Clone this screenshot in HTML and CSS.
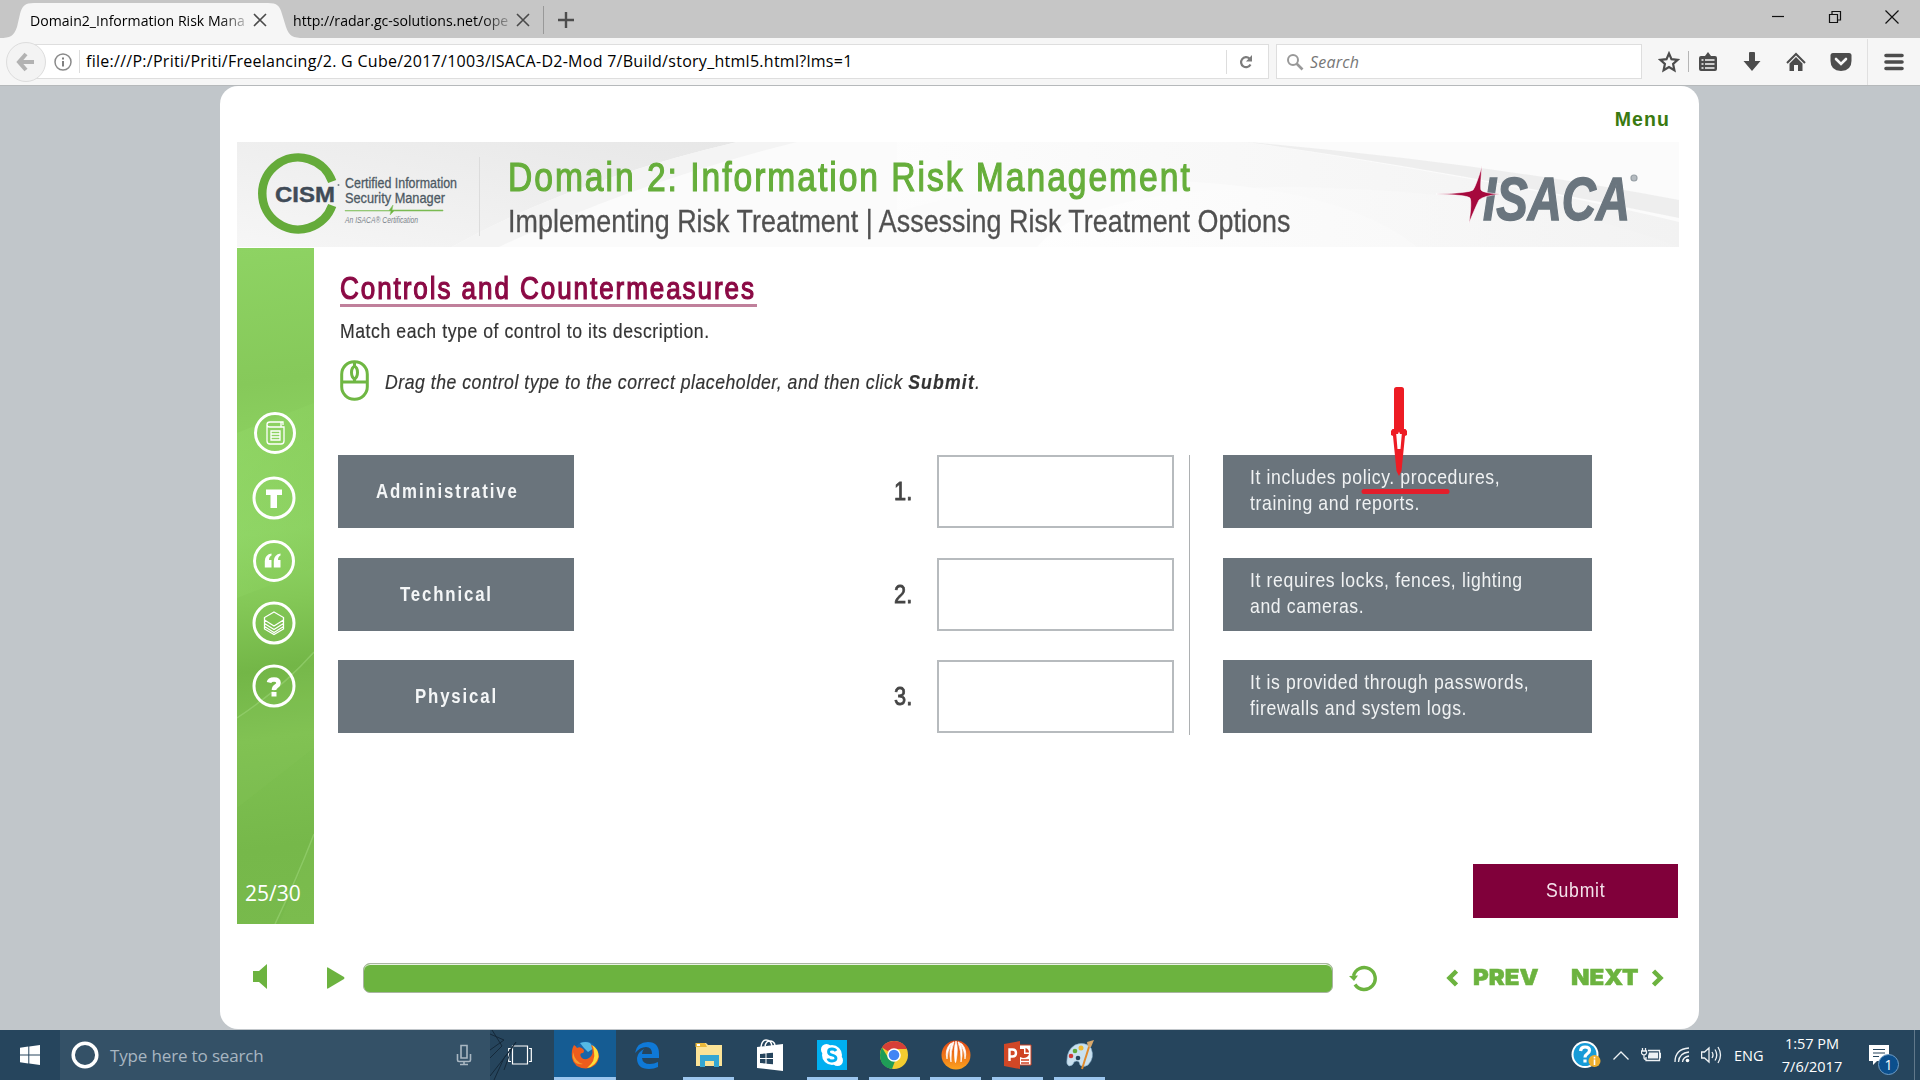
FILE: index.html
```html
<!DOCTYPE html>
<html lang="en">
<head>
<meta charset="utf-8">
<title>Domain2_Information Risk Management</title>
<link rel="stylesheet" href="styles.css">
</head>
<body>
<header class="tabs">
  <div class="tab tab-active">
    <svg class="tab-shape" width="304" height="38" viewBox="0 0 304 38"><path d="M0 38C10 38 14 36 17 27L20 14C22 6 25 3 34 3H268C277 3 280 6 282 14L286 27C289 36 293 38 304 38Z" fill="#f6f6f6"/></svg>
    <span class="tab-label"><span class="tab-text">Domain2_Information Risk Mana</span></span>
    <svg class="x" width="14" height="14" viewBox="0 0 14 14"><path d="M1 1L13 13M13 1L1 13"/></svg>
  </div>
  <div class="tab tab-idle">
    <span class="tab-label"><span class="tab-text tab-text-url">http://radar.gc-solutions.net/ope</span></span>
    <svg class="x" width="14" height="14" viewBox="0 0 14 14"><path d="M1 1L13 13M13 1L1 13"/></svg>
  </div>
  <svg class="plus" width="16" height="16" viewBox="0 0 16 16"><path d="M8 0V16M0 8H16" stroke="#4d4d4d" stroke-width="2.4"/></svg>
  <div class="window-buttons">
    <svg width="14" height="14" viewBox="0 0 14 14"><path d="M1 6.5H13"/></svg>
    <svg width="14" height="14" viewBox="0 0 14 14"><path d="M1.5 4.5H9.500V12.500H1.500ZM4 4.500V1.500H12.500V10H9.500"/></svg>
    <svg width="14" height="14" viewBox="0 0 14 14"><path d="M.5 .5L13.500 13.500M13.500 .5L.5 13.500"/></svg>
  </div>
</header>

<nav class="toolbar">
  <div class="back"><svg width="20" height="20" viewBox="0 0 20 20"><path d="M10 2L3 10L10 18M4 10H18" fill="none" stroke="#b2b2b2" stroke-width="4"/></svg></div>
  <div class="address">
    <svg width="18" height="18" viewBox="0 0 18 18"><circle cx="9" cy="9" r="8" fill="none" stroke="#8a8a8a" stroke-width="1.500"/><path d="M9 8V13.500M9 4.500V6.500" stroke="#808080" stroke-width="2"/></svg>
    <span class="url">file:///P:/Priti/Priti/Freelancing/2. G Cube/2017/1003/ISACA-D2-Mod 7/Build/story_html5.html?lms=1</span>
    <span class="reload"><svg width="14" height="14" viewBox="0 0 14 14"><path d="M11.500 9.500A5 5 0 1 1 10.500 3.500" fill="none" stroke="#7c7c7c" stroke-width="2.200"/><path d="M13 0V6.500H7Z" fill="#7c7c7c"/></svg></span>
  </div>
  <div class="search">
    <svg width="18" height="18" viewBox="0 0 18 18"><circle cx="7" cy="7" r="5" fill="none" stroke="#999" stroke-width="2"/><path d="M10.500 10.500L16.500 16.500" stroke="#999" stroke-width="2.600"/></svg>
    <span>Search</span>
  </div>
  <div class="tools">
    <svg class="i-star" width="22" height="22" viewBox="0 0 22 22"><path d="M11 2.500L13.500 8.200L19.700 8.900L15.100 13L16.400 19.200L11 16.100L5.600 19.200L6.900 13L2.300 8.900L8.500 8.200Z" fill="none" stroke="#4c4c4c" stroke-width="2.200"/></svg>
    <i class="rule"></i>
    <svg class="i-clip" width="20" height="20" viewBox="0 0 20 20"><path d="M3 4H7L10 0L13 4H17Q19 4 19 6V17Q19 19 17 19H3Q1 19 1 17V6Q1 4 3 4Z" fill="#4c4c4c"/><path d="M3.500 8H5.500M7 8H16.500M3.500 12H5.500M7 12H16.500M3.500 16H5.500M7 16H16.500" stroke="#f6f6f6" stroke-width="1.600"/></svg>
    <svg class="i-down" width="18" height="20" viewBox="0 0 18 20"><path d="M6 1Q6 0 7 0H11Q12 0 12 1V9H17.500L9 19L.5 9H6Z" fill="#4c4c4c"/></svg>
    <svg class="i-home" width="20" height="20" viewBox="0 0 20 20"><path d="M1 11L10 2L19 11" fill="none" stroke="#4c4c4c" stroke-width="2"/><path d="M3.500 11.500L10 5L16.500 11.500V19H12V13H8V19H3.500Z" fill="#4c4c4c"/></svg>
    <svg class="i-pocket" width="22" height="20" viewBox="0 0 22 20"><path d="M3 1H19Q21.500 1 21.500 3.500V9Q21.500 18.500 11 19Q.5 18.500 .5 9V3.500Q.5 1 3 1Z" fill="#4c4c4c"/><path d="M6 7L11 12L16 7" fill="none" stroke="#f6f6f6" stroke-width="2.600" stroke-linecap="round"/></svg>
    <i class="rule rule-tall"></i>
    <svg width="20" height="18" viewBox="0 0 20 18"><path d="M2 2.500H18M2 9H18M2 15.500H18" stroke="#4c4c4c" stroke-width="3.600" stroke-linecap="round"/></svg>
  </div>
</nav>

<main class="stage">
  <section class="player">
    <div class="menu">Menu</div>
    <div class="banner">
      <svg class="banner-bg" width="1442" height="105" viewBox="0 0 1442 105">
        <defs>
          <linearGradient id="bl" x1="0" y1="1" x2="1" y2="0"><stop offset="0" stop-color="#f6f6f6"/><stop offset="1" stop-color="#e7e7e7"/></linearGradient>
          <linearGradient id="br" x1="0" y1="0" x2="1" y2="0"><stop offset="0" stop-color="#fdfdfd"/><stop offset="1" stop-color="#efefef"/></linearGradient>
          <linearGradient id="bw" x1="0" y1="0" x2="1" y2="0"><stop offset="0" stop-color="#fff"/><stop offset="1" stop-color="#f3f3f3"/></linearGradient>
        </defs>
        <rect width="1442" height="105" fill="#fbfbfb"/>
        <path d="M0 0H500Q330 40 215 105H0Z" fill="url(#bl)"/>
        <path d="M500 0H560Q400 40 262 105H215Q330 40 500 0Z" fill="#f4f4f4"/>
        <path d="M660 0H1010Q1300 45 1442 80V105H1180Q1100 40 900 38Q760 40 660 70Z" fill="url(#br)" opacity=".75"/>
        <path d="M800 105Q850 45 1060 45Q1300 50 1442 105Z" fill="url(#bw)" opacity=".7"/>
        <path d="M1010 0Q1240 20 1442 58V76Q1220 30 1010 0Z" fill="#ebebeb" opacity=".8"/>
      </svg>
      <svg class="cism" width="206" height="84" viewBox="0 0 206 84">
        <path d="M76.200 29.500A36 36 0 1 0 76.200 53.500" transform="translate(-2 0)" fill="none" stroke="#65ab3a" stroke-width="8.500"/>
        <text x="17" y="50" textLength="60" lengthAdjust="spacingAndGlyphs" class="cism-name">CISM</text>
        <circle cx="80.500" cy="33" r="1" fill="#76808a"/>
        <text x="87" y="36" textLength="112" lengthAdjust="spacingAndGlyphs" class="cism-line">Certified Information</text>
        <text x="87" y="51" textLength="100" lengthAdjust="spacingAndGlyphs" class="cism-line">Security Manager</text>
        <path d="M87 58.500H131L135 53L134 58H185V59H136L132 63L133 59H87Z" fill="#6bb33d" stroke="#8cc56a" stroke-width=".6"/>
        <text x="87" y="71" textLength="73" lengthAdjust="spacingAndGlyphs" class="cism-small">An ISACA® Certification</text>
      </svg>
      <i class="banner-rule"></i>
      <div class="banner-titles">
        <h1>Domain 2: Information Risk Management</h1>
        <p>Implementing Risk Treatment | Assessing Risk Treatment Options</p>
      </div>
      <svg class="isaca" width="204" height="62" viewBox="0 0 204 62">
        <text x="47" y="56" textLength="147" lengthAdjust="spacingAndGlyphs" class="isaca-name">ISACA</text>
        <circle cx="198" cy="14" r="3" fill="#b5bbc0" stroke="#98a0a6" stroke-width="1.200"/>
        <path d="M46 2Q44 24 45 26Q47 29 64 30Q47 32 43 36Q40 42 33 59Q36 38 34 34Q32 31 0 30Q33 29 37 26Q40 22 46 2Z" fill="#a6093d" stroke="#fff" stroke-width=".6"/>
      </svg>
    </div>

    <div class="slide">
      <aside class="rail">
        <svg class="rail-bg" width="77" height="676" viewBox="0 0 77 676">
          <defs><linearGradient id="ray" x1="0" y1="0" x2="1" y2="1"><stop offset="0" stop-color="#94da6a"/><stop offset="1" stop-color="#86ca58"/></linearGradient></defs>
          <path d="M0 185L77 155V320L0 350Z" fill="url(#ray)" opacity=".45"/>
          <path d="M0 470Q45 440 77 406V676H42Q65 620 77 586V500L0 560Z" fill="#8bcb5f" opacity=".15"/>
          <path d="M0 470Q45 440 77 404M38 676Q60 630 77 586" fill="none" stroke="#9bd476" stroke-width="1.500" opacity=".6"/>
        </svg>
        <svg class="rail-icon glossary" width="44" height="44" viewBox="0 0 44 44"><circle cx="22" cy="22" r="19.500"/><path class="thin" d="M14 13V30Q14 33 17 33H28Q31 33 31 30V16H17Q14 16 14 13.500Q14 11 17 11H30V14M28 11V16M18 20H27V29H18ZM18 23H27M18 26H27"/></svg>
        <svg class="rail-icon" width="44" height="44" viewBox="0 0 44 44"><circle cx="22" cy="22" r="20"/><path class="solid" d="M14 13.500H30V19H25V32H18.500V19H14Z"/></svg>
        <svg class="rail-icon" width="44" height="44" viewBox="0 0 44 44"><circle cx="22" cy="22" r="19.500"/><path class="solid" d="M19.500 14.500V16.500Q17 17.500 17 21H19.500V28.500H12.800V22Q13 15.500 19.500 14.500ZM28.500 14.500V16.500Q26 17.500 26 21H28.500V28.500H21.800V22Q22 15.500 28.500 14.500Z"/></svg>
        <svg class="rail-icon" width="44" height="44" viewBox="0 0 44 44"><circle cx="22" cy="22" r="20"/><path class="thin" d="M22 11L31.500 16.500V19L22 25L12.500 19V16.500ZM12.500 19.500V22.500L22 28.500L31.500 22.500V19.500M12.500 23V25.500L22 31.500L31.500 25.500V23M12.500 26V28L22 33.500L31.500 28V26"/></svg>
        <svg class="rail-icon" width="44" height="44" viewBox="0 0 44 44"><circle cx="22" cy="22" r="20"/><path d="M17 18.500Q17.500 15.500 22 15.500Q26.500 15.500 26.500 19Q26.500 20.800 24.500 22Q22 23.500 22 26" class="mark"/><path class="solid" d="M19.500 28H24.500V32.500H19.500Z"/></svg>
        <div class="count">25/30</div>
      </aside>

      <div class="content">
        <div class="heading"><h2>Controls and Countermeasures</h2></div>
        <p class="lead">Match each type of control to its description.</p>
        <div class="hint">
          <svg width="29" height="41" viewBox="0 0 29 41"><g fill="none" stroke="#6fb743" stroke-width="3"><rect x="1.700" y="1.700" width="25.600" height="37.600" rx="12.500"/><path d="M2 22H27M14.500 2V7M14.500 18V22"/><ellipse cx="14.500" cy="12.500" rx="3" ry="6"/></g></svg>
          <p>Drag the control type to the correct placeholder, and then click <b>Submit</b>.</p>
        </div>
        <div class="board">
          <div class="col chips">
            <div class="chip chip-a"><span>Administrative</span></div>
            <div class="chip chip-t"><span>Technical</span></div>
            <div class="chip chip-p"><span>Physical</span></div>
          </div>
          <div class="col nums"><span>1.</span><span>2.</span><span>3.</span></div>
          <div class="col drops"><div class="drop"></div><div class="drop"></div><div class="drop"></div></div>
          <div class="split"></div>
          <div class="col descs">
            <div class="desc"><p>It includes policy. procedures,<br>training and reports.</p>
              <svg class="note" width="94" height="112" viewBox="0 0 94 112"><rect x="34" y="2" width="10" height="46" rx="2.500" fill="#ed1c24"/><path d="M32.500 44H45.500L47 46V50L45 51L43.500 66L41.500 86L39 91L36.500 86L34.500 66L33 51L31 50V46Z" fill="#ed1c24"/><path d="M37.500 64L36.200 49H38L39 46.500L40 49H41.800L40.500 64Z" fill="#fff"/><path d="M4 106.500H87" stroke="#e31e2b" stroke-width="5" stroke-linecap="round"/></svg>
            </div>
            <div class="desc"><p>It requires locks, fences, lighting<br>and cameras.</p></div>
            <div class="desc"><p>It is provided through passwords,<br>firewalls and system logs.</p></div>
          </div>
        </div>
        <div class="submit"><span>Submit</span></div>
      </div>
    </div>

    <footer class="controls">
      <svg class="vol" width="14" height="25" viewBox="0 0 14 25"><path d="M0 7H6L14 0V25L6 18H0Z"/></svg>
      <svg class="play" width="18" height="22" viewBox="0 0 18 22"><path d="M1 0.500Q0 0 0 1V21Q0 22 1 21.500L17 12Q18 11 17 10Z"/></svg>
      <div class="seek"></div>
      <svg class="replay" width="28" height="28" viewBox="0 0 28 28"><path d="M4.500 12A11 11 0 1 1 6 20.500" fill="none" stroke="#6cb33f" stroke-width="3.400"/><path d="M0 12L9 11.500L5 17Z"/></svg>
      <svg class="chev" width="12" height="18" viewBox="0 0 12 18"><path d="M10.500 2L3.500 9L10.500 16" class="chev-line"/></svg>
      <span class="nav prev">PREV</span>
      <span class="nav next">NEXT</span>
      <svg class="chev" width="12" height="18" viewBox="0 0 12 18"><path d="M1.500 2L8.500 9L1.500 16" class="chev-line"/></svg>
    </footer>
  </section>
</main>

<footer class="taskbar">
  <div class="start"><svg width="20" height="20" viewBox="0 0 20 20"><path d="M0 2.800L8.300 1.600V9.400H0ZM9.300 1.500L20 0V9.400H9.300ZM0 10.500H8.300V18.400L0 17.200ZM9.300 10.500H20V20L9.300 18.500Z" fill="#fff"/></svg></div>
  <div class="cortana">
    <svg width="28" height="28" viewBox="0 0 28 28"><circle cx="14" cy="14" r="11.800" fill="none" stroke="#fff" stroke-width="3.500"/></svg>
    <span class="ask">Type here to search</span>
    <svg class="mic" width="16" height="22" viewBox="0 0 16 22"><path d="M5 1.500H11V14H5ZM1.500 10V16Q1.500 17.500 3 17.500H13Q14.500 17.500 14.500 16V10M8 17.500V21M4 20.500H12" fill="none" stroke="#a9b7c2" stroke-width="1.600"/></svg>
  </div>
  <div class="taskview">
    <svg class="scribble" width="30" height="50" viewBox="0 0 30 50"><path d="M0 4L14 10L0 20M2 0L12 16L0 28M0 46L22 18L26 12L14 28L4 50M22 18L14 40" fill="none" stroke="#15293a" stroke-width="1"/></svg>
    <svg width="24" height="20" viewBox="0 0 24 20"><path d="M4.500 1H19.500V19H4.500ZM3 3.500H.7V16.500H3M21 3.500H23.300V16.500H21" fill="none" stroke="#fff" stroke-width="1.200"/></svg>
  </div>
  <div class="apps">
    <div class="app on active"><svg width="30" height="30" viewBox="0 0 30 30"><circle cx="16" cy="14" r="12.500" fill="#1765a9"/><path d="M10 3Q16 1 20 3L24 8L18 12L14 8Z" fill="#55b9e4"/><path d="M4 5Q6 6 7 8Q10 6 13 9Q15 11 13 13Q9 13 11 17Q14 21 19 18Q25 14 21 5Q28 8 29 16Q28 27 16 28.500Q4 28 2 18Q1 10 4 5Z" fill="#ee5c1c"/><path d="M22 5Q29 9 28.500 17Q26 26 17 28Q26 21 24 12Q24 8 22 5Z" fill="#fddd3a"/><path d="M3 12Q5 22 13 24Q7 25 4 21Q2 17 3 12Z" fill="#f89c2f"/></svg></div>
    <div class="app"><svg width="30" height="30" viewBox="0 0 30 30"><path d="M3 13Q5 2 16 2Q27 2 27 14V18H10Q10.500 24 18 24Q22 24 26 22V27Q22 29 17 29Q5 29 5 18Q6 12 12 9Q10 11 10 14H20Q20 7 14 7Q8 7 3 13Z" fill="#0f79d7"/></svg></div>
    <div class="app on"><svg width="30" height="30" viewBox="0 0 30 30"><path d="M2 3H12L14 5H28V26H2Z" fill="#fbe397"/><path d="M1.500 3H11L13 7H1.500Z" fill="#e9b83a"/><path d="M3 4H6V6H3Z" fill="#fff"/><path d="M6 15H25V27H20V21H11V27H6Z" fill="#35a6d2"/></svg></div>
    <div class="app"><svg width="28" height="32" viewBox="0 0 28 32"><path d="M1 8L27 5V32L1 29Z" fill="#fff"/><path d="M5 8Q6 1 10 1Q15 1 16 7M9 7Q10 2 14 2Q18 2 19 6" fill="none" stroke="#fff" stroke-width="1.500"/><path d="M4 15L9.500 14.500V19H4ZM10.500 14.300L17 13.700V19H10.500ZM4 20H9.500V24.500L4 24ZM10.500 20H17V25.300L10.500 24.700Z" fill="#26455d"/></svg></div>
    <div class="app on"><svg width="30" height="30" viewBox="0 0 30 30"><rect width="30" height="30" fill="#00aff0"/><circle cx="15" cy="15" r="10" fill="#fff"/><circle cx="9.500" cy="9.500" r="5.500" fill="#fff"/><circle cx="20.500" cy="20.500" r="5.500" fill="#fff"/><path d="M19 11Q18 9 15 9Q11.500 9 11.500 11.800Q11.500 14.300 15 15Q19 15.800 19 18.300Q19 21 15 21Q11.500 21 11 18.500" fill="none" stroke="#00aff0" stroke-width="2.800"/></svg></div>
    <div class="app on"><svg width="30" height="30" viewBox="0 0 30 30"><circle cx="15" cy="15" r="14" fill="#f3cc30"/><path d="M15 15L3 7.500Q7 1 15 1Q24 1 28 9H15Z" fill="#d63f37"/><path d="M3 7.500L10 19L16 21L13 29Q1 27 1 15Q1 11 3 7.500Z" fill="#1f9d57"/><circle cx="15" cy="15" r="6.800" fill="#fff"/><circle cx="15" cy="15" r="5.300" fill="#4285f4"/></svg></div>
    <div class="app on"><svg width="30" height="30" viewBox="0 0 30 30"><defs><linearGradient id="om" x1="0" y1="0" x2="0" y2="1"><stop offset="0" stop-color="#e24816"/><stop offset="1" stop-color="#fba21e"/></linearGradient></defs><circle cx="15" cy="15" r="14.500" fill="url(#om)"/><path d="M15 1Q12.500 8 14 21Q14.500 24 15 21Q17.500 8 15 1ZM12 2Q7 9 10 22Q9.500 11 13 2ZM18 2Q23 9 20 22Q20.500 11 17 2ZM9 4Q3.500 10 6 19Q6 11 11 3ZM21 4Q26.500 10 24 19Q24 11 19 3Z" fill="#fff" stroke="#fff" stroke-width=".7"/></svg></div>
    <div class="app on"><svg width="28" height="28" viewBox="0 0 28 28"><path d="M13 4H27V24H13Z" fill="#fff" stroke="#cf4223"/><path d="M17 19H25M17 22H25" stroke="#cf4223" stroke-width="1.500"/><path d="M16 8H20V13H25Q24 17 19 17L16 16ZM21.500 7Q25 8 25 11.500H21.500Z" fill="#cf4223"/><path d="M0 3L16 0V28L0 25Z" fill="#d24726"/><path d="M5.500 20V8.500H8.500Q12 8.500 12 12Q12 15.500 8.500 15.500H6" fill="none" stroke="#fff" stroke-width="2.400"/></svg></div>
    <div class="app on"><svg width="30" height="30" viewBox="0 0 30 30"><path d="M2 20Q2 10 10 5Q20 1 26 8Q30 18 23 25Q18 28 15 25Q14 19 9 22Q8 26 4 26Q1 24 2 20Z" fill="#c9e0ef" stroke="#8db4cf" stroke-width=".6"/><circle cx="6" cy="16" r="2.300" fill="#cf3a36"/><circle cx="10" cy="11" r="2.300" fill="#62a83a"/><circle cx="16" cy="8" r="2.500" fill="#f0b92f"/><circle cx="13" cy="18" r="2.300" fill="#26455d"/><path d="M17 29L24 7" stroke="#e0892c" stroke-width="2"/><path d="M22 2L29 0L26 7L23 7Z" fill="#d9a86b"/></svg></div>
  </div>
  <div class="tray">
    <svg class="t-help" width="30" height="28" viewBox="0 0 30 28"><circle cx="14" cy="13.500" r="13.500" fill="#fff"/><circle cx="14" cy="13.500" r="11.500" fill="#179bd7"/><path d="M9.500 10Q10 6 14 6Q18.500 6 18.500 9.500Q18.500 11.500 16 13Q14 14.300 14 16.500M14 18.500V21.500" fill="none" stroke="#fff" stroke-width="3.200"/><circle cx="23.500" cy="20" r="6" fill="#eeae2d"/><path d="M23.500 18.500V24M23.500 15.800V17.500" stroke="#fff" stroke-width="1.600"/></svg>
    <svg class="t-up" width="16" height="9" viewBox="0 0 16 9"><path d="M.5 8.500L8 1L15.500 8.500" class="tl"/></svg>
    <svg class="t-bat" width="20" height="14" viewBox="0 0 20 14"><path d="M7 2.500H18.500V12.500H5V9M18.500 5.500H19.500V9.500H18.500M1.500 0V3M4.500 0V3M0.500 3H5.500V5Q5 7 3 7Q1 7 .5 5ZM3 7V9.500Q3 11.500 5 11.500" class="tl"/><path d="M8 4.500H17V10.500H7V8Z" fill="#eef2f5"/></svg>
    <svg class="t-wifi" width="16" height="16" viewBox="0 0 16 16"><path d="M1 15Q1 2 15 1M4.500 15Q5 6 15 5M8.500 15Q9 10 15 9" class="tl"/><circle cx="13.500" cy="13.500" r="1.800" fill="#fff"/></svg>
    <svg class="t-vol" width="21" height="18" viewBox="0 0 21 18"><path d="M.6 6H3.500L8 2V16L3.500 12H.6ZM11 6Q13 9 11 12M14 3.500Q17.500 9 14 14.500M17 1Q22 9 17 17" class="tl"/></svg>
    <span class="lang">ENG</span>
    <div class="clock"><span>1:57 PM</span><span>7/6/2017</span></div>
    <div class="center">
      <svg width="20" height="20" viewBox="0 0 20 20"><path d="M0 0H20V16H8L4 20V16H0Z" fill="#fff"/><path d="M4 4.500H16M4 8H16M4 11.500H10" stroke="#26455d" stroke-width="1.200"/></svg>
      <span class="badge">1</span>
    </div>
    <i class="peek"></i>
  </div>
</footer>
</body>
</html>
```
FILE: styles.css
```css
* { box-sizing: border-box; }
html, body { margin: 0; }
body { width: 1920px; height: 1080px; overflow: hidden; display: flex; flex-direction: column; background: #c1c6ca; font-family: "Liberation Sans", Arial, sans-serif; }
h1, h2, p { margin: 0; font-weight: 400; }
svg { display: block; flex: none; }

/* browser chrome */
.tabs { height: 38px; flex: none; display: flex; align-items: flex-start; background: #c6c6c6; font: 15px/20px "Open Sans", "Noto Sans", sans-serif; color: #000; }
.tab { display: flex; align-items: center; height: 38px; position: relative; padding-top: 2px; }
.tab-active { width: 293px; padding-left: 30px; }
.tab-idle { width: 251px; height: 28px; margin-top: 6px; border-right: 1px solid #999; padding: 0; }
.tab-shape { position: absolute; left: 0; top: 0; }
.tab-label { position: relative; width: 215px; -webkit-mask-image: linear-gradient(90deg, #000 88%, rgba(0,0,0,.25)); mask-image: linear-gradient(90deg, #000 88%, rgba(0,0,0,.25)); }
.tab-text { display: inline-block; white-space: nowrap; transform: scaleX(.94); transform-origin: 0 50%; }
.x { position: relative; margin-left: 8px; fill: none; stroke: #4a4a4a; stroke-width: 1.6; }
.plus { margin: 12px 0 0 14px; }
.window-buttons { margin: 10px 21px 0 auto; display: flex; gap: 43px; fill: none; stroke: #111; stroke-width: 1.2; }
.toolbar { height: 48px; flex: none; display: flex; align-items: center; background: #f6f6f6; border-bottom: 1px solid #b6b9bb; font-family: "Open Sans", "Noto Sans", sans-serif; }
.back { position: relative; z-index: 1; margin-left: 6px; width: 40px; height: 40px; border: 1px solid #ddd; border-radius: 50%; background: #f3f3f3; display: flex; align-items: center; justify-content: center; }
.address { margin-left: -20px; width: 1243px; height: 35px; background: #fff; border: 1px solid #dedede; display: flex; align-items: center; padding-left: 27px; }
.url { margin-left: 7px; border-left: 1px solid #ddd; padding-left: 6px; line-height: 23px; font-size: 16px; letter-spacing: .275px; white-space: nowrap; color: #000; }
.reload { margin-left: auto; width: 42px; height: 24px; border-left: 1px solid #ddd; display: flex; align-items: center; padding-left: 12px; }
.search { margin-left: 7px; width: 366px; height: 35px; background: #fff; border: 1px solid #dedede; display: flex; align-items: center; padding-left: 9px; gap: 6px; font-style: italic; font-size: 16px; letter-spacing: .2px; color: #777; }
.tools { display: flex; align-items: center; flex: 1; }
.i-star { margin-left: 16px; }
.rule { width: 1px; height: 21px; background: #b5b5b5; margin: 0 9px 0 8px; }
.i-down { margin-left: 25px; }
.i-home { margin-left: 25px; }
.i-pocket { margin-left: 24px; }
.rule-tall { height: 46px; background: #e0e0e0; margin: 0 16px 0 15px; }

/* course player */
.stage { height: 944px; flex: none; padding-left: 220px; }
.player { width: 1479px; height: 943px; background: #fff; border-radius: 18px; padding: 0 20px 0 17px; }
.menu { height: 56px; padding: 21px 9px 0 0; text-align: right; font: bold 19.500px/24px "Liberation Sans", sans-serif; letter-spacing: 1.100px; color: #3a7a10; }
.banner { position: relative; height: 105px; display: flex; }
.banner > * { position: relative; }
.banner .banner-bg { position: absolute; left: 0; top: 0; }
.cism { margin: 10px 0 0 21px; overflow: visible; }
.cism-name { font: bold 22.500px "Liberation Sans", sans-serif; fill: #404b57; stroke: #404b57; stroke-width: .4; }
.cism-line { font: 15px "Liberation Sans", sans-serif; fill: #4d5963; stroke: #4d5963; stroke-width: .3; }
.cism-small { font: italic 9px "Liberation Sans", sans-serif; fill: #7a828a; }
.banner-rule { width: 1px; height: 79px; margin: 15px 0 0 15px; background: #dcdcdc; }
.banner-titles { width: 930px; margin: 12px 0 0 28px; }
.banner-titles h1, .banner-titles p, .heading h2, .lead, .hint p, .chip span, .nums span, .desc p, .submit span { transform: scaleX(.84); transform-origin: 0 50%; white-space: nowrap; }
.banner-titles h1 { font-size: 40px; line-height: 46px; letter-spacing: 2.350px; color: #66ae3b; -webkit-text-stroke: 1.200px #66ae3b; }
.banner-titles p { margin-top: 3px; font-size: 32px; line-height: 36px; letter-spacing: .03px; color: #505050; -webkit-text-stroke: .3px #505050; }
.isaca { margin-top: 22px; margin-left: -2px; overflow: visible; }
.isaca-name { font: italic bold 62px "Liberation Sans", sans-serif; fill: #6a757e; stroke: #6a757e; stroke-width: 1.500; }

.slide { display: flex; margin-top: 1px; height: 676px; }
.rail { position: relative; width: 77px; padding: 163px 0 0 15px; background: linear-gradient(172deg, #8ed363 0%, #86c95a 20%, #8cd160 30%, #90d667 42%, #84c857 52%, #73b647 62%, #7fc152 72%, #76b84a 88%, #78ba4c 100%); }
.rail-bg { position: absolute; left: 0; top: 0; }
.rail-icon { position: relative; margin-bottom: 18.500px; fill: none; stroke: #fff; stroke-width: 3; }
.glossary { left: 1px; margin-bottom: 21px; }
.rail-icon .thin { stroke-width: 1.300; }
.rail-icon .solid { fill: #fff; stroke: none; }
.rail-icon .mark { stroke-width: 4.600; }
.count { position: relative; margin: 171px 0 0 -7px; font: 21px/28px "Open Sans", "Noto Sans", sans-serif; color: #fff; }
.content { width: 1365px; padding: 27px 0 0 24px; }
.heading { width: 417px; margin-left: 2px; height: 32px; border-bottom: 3px solid #c0809b; }
.heading h2 { font-size: 31px; line-height: 28px; letter-spacing: 2.300px; color: #8b0a45; -webkit-text-stroke: 1.200px #8b0a45; }
.lead { margin: 12px 0 0 2px; font-size: 21px; line-height: 24px; letter-spacing: .660px; color: #333; -webkit-text-stroke: .2px #333; }
.hint { display: flex; margin: 17px 0 0 2px; height: 41px; gap: 16px; }
.hint p { margin-top: 10px; font-size: 21px; line-height: 24px; font-style: italic; letter-spacing: .620px; color: #333; -webkit-text-stroke: .2px #333; }
.hint b { letter-spacing: 1.400px; }
.board { display: flex; margin-top: 54px; height: 280px; }
.col { display: grid; grid-template-rows: 103px 102px 73px; align-items: start; }
.chip { width: 236px; height: 73px; background: #6a747c; color: #f4f6f7; font: bold 20px/73px "Liberation Sans", sans-serif; letter-spacing: 2.200px; }
.chip span { display: block; }
.chip-a { padding-left: 38px; }
.chip-t { padding-left: 62px; }
.chip-p { padding-left: 77px; }
.nums { width: 44px; margin-left: 320px; font-size: 26px; line-height: 73px; color: #444; -webkit-text-stroke: .8px #444; }
.drops { margin-left: -1px; }
.drop { width: 237px; height: 73px; border: 2px solid #b7bbbe; background: #fff; }
.split { width: 1px; height: 280px; margin: 0 33px 0 15px; background: #adb0b2; }
.desc { position: relative; width: 369px; height: 73px; padding: 9px 0 0 27px; background: #6a747c; color: #f0f2f3; }
.desc p { font-size: 21px; line-height: 26px; letter-spacing: .740px; }
.note { position: absolute; left: 137px; top: -70px; }
.submit { width: 205px; height: 54px; margin: 129px 0 0 1135px; padding-left: 73px; background: #80003a; color: #f4e3eb; font-size: 21px; line-height: 52px; letter-spacing: .900px; }
.submit span { display: block; }
.controls { display: flex; align-items: flex-start; padding-top: 39px; fill: #6cb33f; }
.vol { margin: 1px 0 0 16px; }
.play { margin: 4px 0 0 60px; }
.seek { width: 970px; height: 30px; margin-left: 18px; background: #6cb33f; border: 1px solid #a9b5a2; border-radius: 7px; box-shadow: inset 0 1px 0 #e9f3e3; }
.replay { margin: 1px 0 0 16px; }
.chev { margin-top: 6px; }
.replay + .chev { margin-left: 69px; }
.chev-line { fill: none; stroke: #6cb33f; stroke-width: 4.500; }
.nav { font: 900 22px/28px Inter, "Liberation Sans", sans-serif; color: #6cb33f; transform: scaleX(1.09); transform-origin: 0 50%; -webkit-text-stroke: .5px #6cb33f; }
.prev { width: 98px; margin-left: 15px; }
.next { width: 81px; }

/* taskbar */
.taskbar { height: 50px; flex: none; display: flex; background: #26455d; font-family: "Open Sans", "Noto Sans", sans-serif; color: #fff; }
.start { width: 60px; display: flex; align-items: center; justify-content: center; }
.cortana { width: 430px; display: flex; align-items: center; background: #345167; padding-left: 11px; }
.ask { width: 345px; padding-left: 11px; font-size: 17px; letter-spacing: -.15px; color: #a8b6c1; white-space: nowrap; }
.mic { margin-left: 12px; }
.taskview { position: relative; width: 64px; display: flex; align-items: center; padding-left: 18px; }
.scribble { position: absolute; left: 0; top: 0; }
.apps { display: flex; }
.app { width: 61.850px; height: 50px; display: flex; align-items: center; justify-content: center; border-bottom: 3px solid transparent; padding-top: 3px; }
.app.on { background: linear-gradient(#9cc6ee, #9cc6ee) center bottom / 51px 3px no-repeat border-box; }
.app.active { background: linear-gradient(#9cc6ee, #9cc6ee) center bottom / 100% 3px no-repeat border-box, #155c93; }
.tray { margin-left: auto; display: flex; align-items: center; font-size: 15px; }
.tl { fill: none; stroke: #eef2f5; stroke-width: 1.300; }
.t-up { margin-left: 12px; }
.t-bat { margin-left: 12px; }
.t-wifi { margin-left: 13px; }
.t-vol { margin-left: 11px; }
.lang { width: 29px; margin-left: 12px; font-size: 14.500px; }
.clock { width: 70px; margin-left: 14px; margin-right: 1px; display: flex; flex-direction: column; align-items: center; line-height: 23px; font-size: 14.500px; }
.center { position: relative; width: 30px; margin-left: 21px; }
.badge { position: absolute; left: 9px; top: 9px; width: 21px; height: 21px; border: 1px solid #6f9dc6; border-radius: 50%; background: #0b4f8d; font-size: 14px; line-height: 19px; text-align: center; }
.peek { width: 1px; height: 50px; margin: 0 5px 0 15px; background: #61788a; }
```
